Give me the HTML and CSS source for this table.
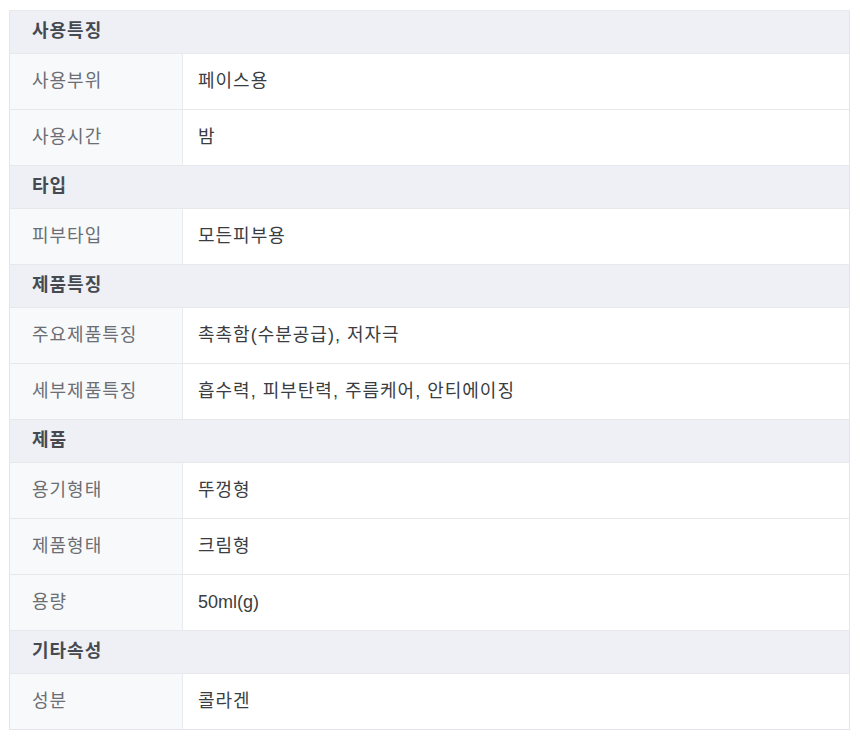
FILE: index.html
```html
<!DOCTYPE html>
<html lang="ko">
<head>
<meta charset="utf-8">
<link rel="stylesheet" href="styles.css">
</head>
<body>
<table class="spec">
<colgroup><col class="c-label"><col></colgroup>
<tbody>
<tr class="sec"><th colspan="2">사용특징</th></tr>
<tr><td class="lb">사용부위</td><td class="val">페이스용</td></tr>
<tr><td class="lb">사용시간</td><td class="val">밤</td></tr>
<tr class="sec"><th colspan="2">타입</th></tr>
<tr><td class="lb">피부타입</td><td class="val">모든피부용</td></tr>
<tr class="sec"><th colspan="2">제품특징</th></tr>
<tr><td class="lb">주요제품특징</td><td class="val">촉촉함(수분공급), 저자극</td></tr>
<tr><td class="lb">세부제품특징</td><td class="val">흡수력, 피부탄력, 주름케어, 안티에이징</td></tr>
<tr class="sec"><th colspan="2">제품</th></tr>
<tr><td class="lb">용기형태</td><td class="val">뚜껑형</td></tr>
<tr><td class="lb">제품형태</td><td class="val">크림형</td></tr>
<tr><td class="lb">용량</td><td class="val latin">50ml(g)</td></tr>
<tr class="sec"><th colspan="2">기타속성</th></tr>
<tr><td class="lb">성분</td><td class="val">콜라겐</td></tr>
</tbody>
</table>
</body>
</html>
```
FILE: styles.css
```css
html, body {
  margin: 0;
  padding: 0;
  background: #ffffff;
}
body {
  padding: 10px 10px 0 9px;
  font-family: "Liberation Sans", "Noto Sans CJK KR", sans-serif;
}
.spec {
  width: 841px;
  border-collapse: collapse;
  border: 1px solid #e3e5ea;
  font-size: 18px;
  letter-spacing: 1px;
}
.c-label {
  width: 173px;
}
.spec th,
.spec td {
  border-top: 1px solid #e6e8ec;
  text-align: left;
  padding: 0;
  line-height: 1.2;
}
.sec th {
  height: 42px;
  background: #eef0f5;
  color: #464a50;
  font-weight: 700;
  padding-left: 22px;
}
.lb {
  height: 55px;
  background: #f8f9fb;
  color: #6b6e73;
  padding-left: 22px !important;
  border-right: 1px solid #e8eaee;
}
.val {
  height: 55px;
  color: #3a3d41;
  padding-left: 15px !important;
}
.val.latin {
  letter-spacing: 0;
}
```
